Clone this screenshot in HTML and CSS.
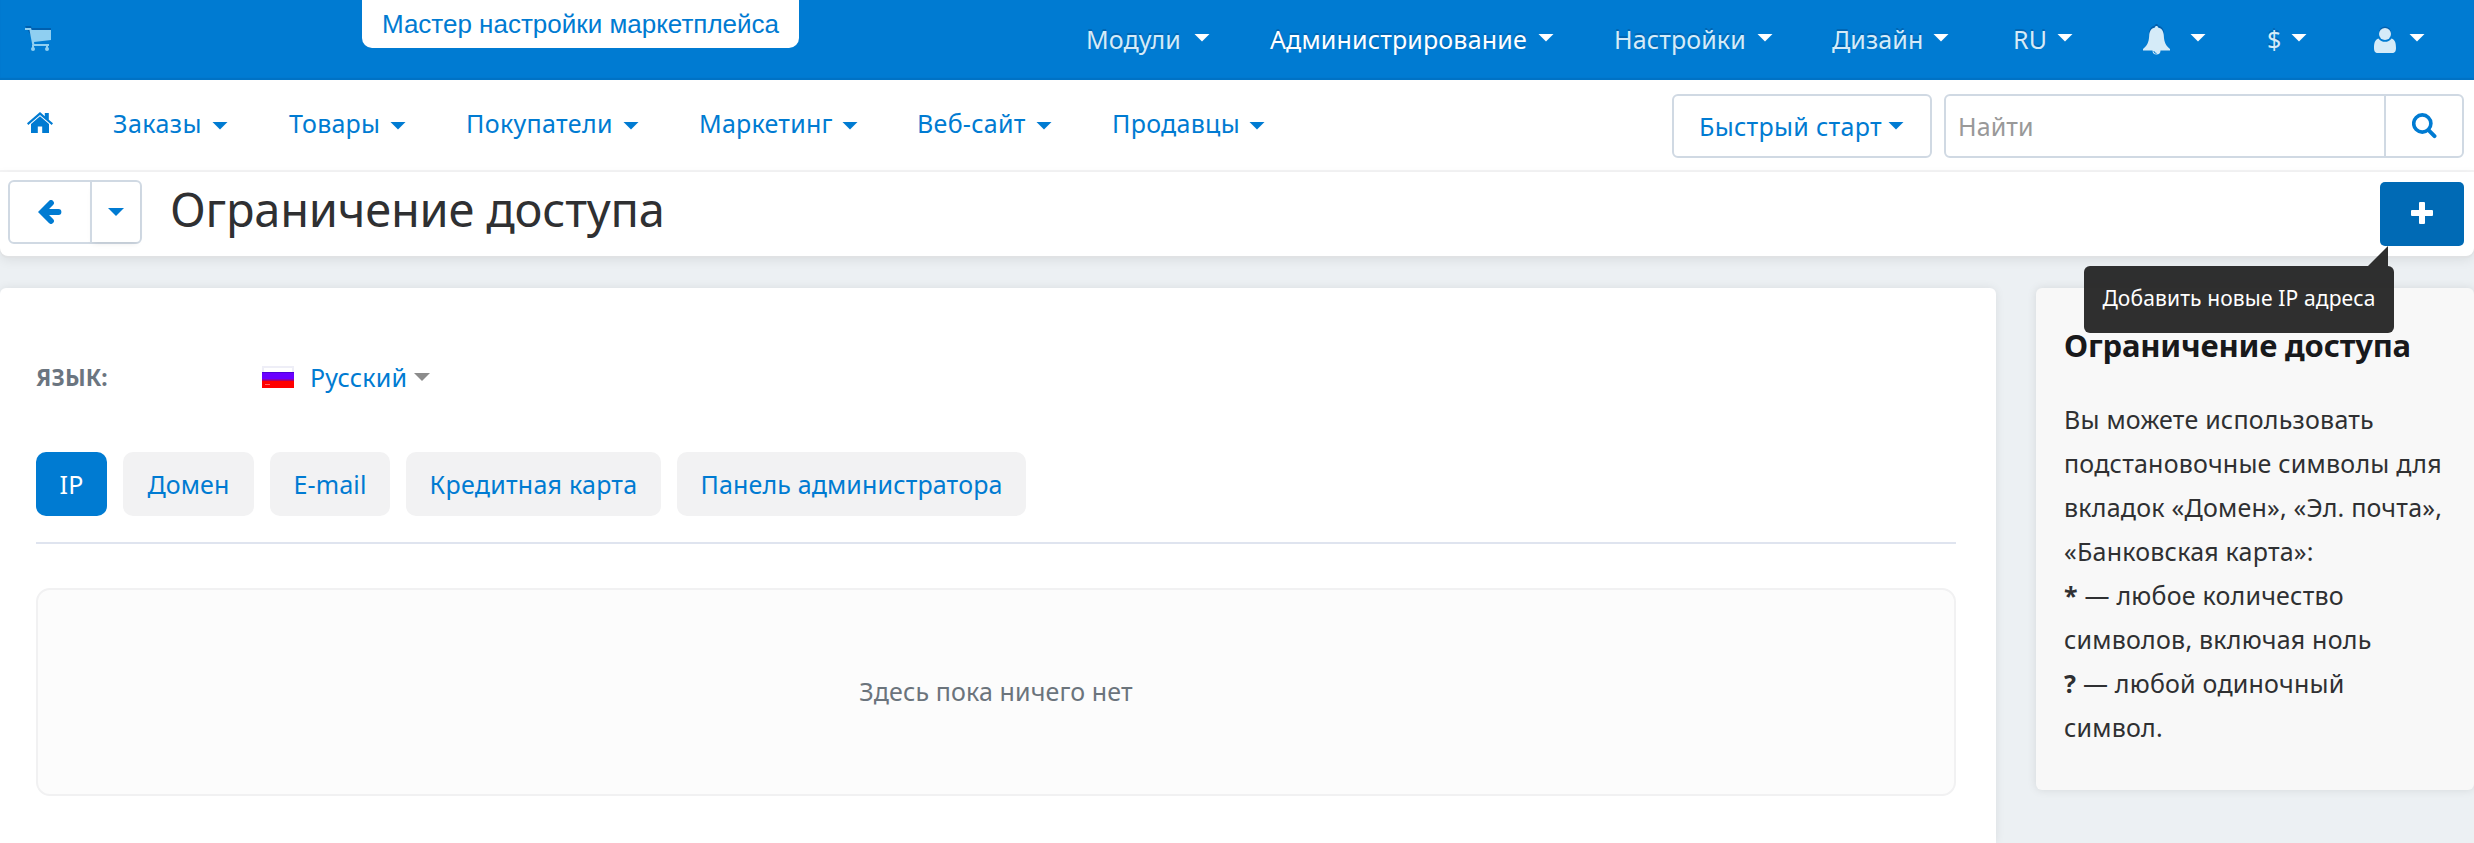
FILE: index.html
```html
<!DOCTYPE html>
<html lang="ru">
<head>
<meta charset="utf-8">
<title>Ограничение доступа</title>
<link rel="stylesheet" href="styles.css">
</head>
<body>
<header class="topbar">
  <svg class="cart" width="26" height="26" viewBox="0 0 26 26"><g fill="#005fae" transform="translate(0,-2)"><path d="M0 2h6l.6 2H26v10L9 16z"/></g><path fill="#8fcff1" d="M0 2h6l.6 2H26v10L9 16l.3 2H24v2H7.500L4.500 4H0z"/><path fill="#8fcff1" d="M7 19h2v4H7zM21 19h2v4h-2z"/><circle cx="8" cy="23" r="2" fill="#8fcff1"/><circle cx="22" cy="23" r="2" fill="#8fcff1"/></svg>
  <a class="wizard">Мастер настройки маркетплейса</a>
  <nav class="menu menu-top">
    <a class="item w-modules"><span>Модули</span><i class="caret"></i></a>
    <a class="item w-admin active"><span>Администрирование</span><i class="caret"></i></a>
    <a class="item w-settings"><span>Настройки</span><i class="caret"></i></a>
    <a class="item w-design"><span>Дизайн</span><i class="caret"></i></a>
    <a class="item w-lang"><span>RU</span><i class="caret"></i></a>
    <a class="item w-bell"><svg width="27" height="31" viewBox="0 0 27 31"><path fill="#005fae" d="M13.500 0c1 0 1.500.6 1.500 1.600 4 .8 6 4 6 8l-1 1c-1-5-2-7-6.500-7S8 6 7 11L6 10c0-4.500 2-7.500 6-8.400C12 .6 12.500 0 13.500 0z"/><path fill="#d5ebf8" d="M13.500 2c1 0 1.500.6 1.500 1.600 4 .8 5.600 4 5.800 8 .3 7 2.200 10.400 6.200 13.400v1.500h-9.500a4 4 0 0 1-8 0H0V25c4-3 5.900-6.400 6.200-13.400.2-4 1.800-7.200 5.800-8C12 2.600 12.500 2 13.500 2z"/><path d="M10.800 27a2.700 2.700 0 0 0 2.700 2.400" fill="none" stroke="#007bd2"/></svg><i class="caret"></i></a>
    <a class="item w-currency"><span>$</span><i class="caret"></i></a>
    <a class="item w-user"><svg width="22" height="27" viewBox="0 0 22 27"><circle cx="11" cy="6.500" r="6" fill="#005fae"/><circle cx="11" cy="8" r="6" fill="#d5ebf8"/><path fill="#d5ebf8" d="M4.500 12.500a8 8 0 0 0 13 0C21 13.500 22 17 22 22c0 3-1 5-4 5H4c-3 0-4-2-4-5 0-5 1-8.500 4.500-9.500z"/></svg><i class="caret"></i></a>
  </nav>
</header>

<div class="subbar">
  <svg class="home" width="26" height="21" viewBox="0 0 26 21"><path fill="#007bd2" d="M13 0l4.800 4.300V1h4v6.800L26 11.300 24.700 13 13 2.900 1.300 13 0 11.300z"/><path fill="#007bd2" d="M13 4.300l9 7.800V21h-6.800v-6.500h-4.400V21H4v-8.900z"/></svg>
  <nav class="menu menu-main">
    <a class="item w-orders"><span>Заказы</span><i class="caret"></i></a>
    <a class="item w-products"><span>Товары</span><i class="caret"></i></a>
    <a class="item w-customers"><span>Покупатели</span><i class="caret"></i></a>
    <a class="item w-marketing"><span>Маркетинг</span><i class="caret"></i></a>
    <a class="item w-website"><span>Веб-сайт</span><i class="caret"></i></a>
    <a class="item w-vendors"><span>Продавцы</span><i class="caret"></i></a>
  </nav>
  <a class="quick"><span>Быстрый старт</span><i class="caret"></i></a>
  <div class="search">
    <span class="search-text">Найти</span>
    <a class="search-btn"><svg width="25" height="26" viewBox="0 0 25 26"><circle cx="10.300" cy="10.500" r="8.600" fill="none" stroke="#007bd2" stroke-width="3.600"/><path d="M16.800 17.300l5.700 5.800" stroke="#007bd2" stroke-width="4" stroke-linecap="round"/></svg></a>
  </div>
</div>

<div class="titlebar">
  <div class="back">
    <a class="back-main"><svg width="24" height="24" viewBox="0 0 24 24"><path d="M13 3L4 12l9 9M4.500 12H20.500" fill="none" stroke="#007bd2" stroke-width="5.800" stroke-linecap="round"/></svg></a>
    <a class="back-more"><i class="caret"></i></a>
  </div>
  <h1>Ограничение доступа</h1>
  <div class="add">
    <svg width="22" height="22" viewBox="0 0 22 22"><path fill="#fff" d="M9 0h4q1 0 1 1v7h7q1 0 1 1v4q0 1-1 1h-7v7q0 1-1 1H9q-1 0-1-1v-7H1q-1 0-1-1V9q0-1 1-1h7V1q0-1 1-1z"/></svg>
    <div class="tooltip"><span>Добавить новые IP адреса</span></div>
  </div>
</div>

<div class="page">
  <main class="card">
    <div class="lang">
      <span class="lang-label">ЯЗЫК:</span>
      <svg class="flag" width="32" height="22" viewBox="0 0 32 22"><path fill="#eeeef7" d="M0 0h32v7H0z"/><path fill="#fff" d="M2 2h28v4H2z"/><path fill="#6a00ff" d="M0 6h32v9H0z"/><path fill="#4b00d8" d="M0 6h32v1H0z"/><path fill="#f00" d="M0 14h32v8H0z"/><path fill="#ad0068" d="M0 13.500h32V15H0z"/><path d="M3 18.500h5" stroke="#ff6464"/></svg>
      <span class="lang-name">Русский</span><i class="caret"></i>
    </div>
    <div class="tabs">
      <a class="tab t-ip on"><span>IP</span></a>
      <a class="tab t-domain"><span>Домен</span></a>
      <a class="tab t-mail"><span>E-mail</span></a>
      <a class="tab t-card"><span>Кредитная карта</span></a>
      <a class="tab t-panel"><span>Панель администратора</span></a>
    </div>
    <div class="empty"><span>Здесь пока ничего нет</span></div>
  </main>
  <aside class="help">
    <h2>Ограничение доступа</h2>
    <p>Вы можете использовать<br>подстановочные символы для<br>вкладок «Домен», «Эл. почта»,<br>«Банковская карта»:<br><b>*</b> — любое количество<br>символов, включая ноль<br><b>?</b> — любой одиночный<br>символ.</p>
  </aside>
</div>
</body>
</html>
```
FILE: styles.css
```css
* { box-sizing: border-box; }
body {
  margin: 0;
  height: 843px;
  overflow: hidden;
  display: flex;
  flex-direction: column;
  background: #ecf0f3;
  color: #2f3032;
  font: 25px/36px "Noto Sans", "Open Sans", sans-serif;
  letter-spacing: .12px;
}
svg { display: block; flex: none; }
span, h1, h2, p { white-space: nowrap; }

.caret {
  flex: none;
  width: 16px;
  height: 8px;
  background: currentColor;
  clip-path: polygon(0 0, 100% 0, 50% 100%);
}

/* Top bar */
.topbar {
  flex: none;
  height: 80px;
  display: flex;
  align-items: center;
  background: #007bd2;
  box-shadow: inset 0 -2px 1px #0072c4;
}
.cart { margin: -2px 0 0 25px; }
.wizard {
  align-self: flex-start;
  width: 437px;
  height: 48px;
  margin-left: 311px;
  border-radius: 0 0 10px 10px;
  background: #fff;
  color: #007bd2;
  font: 26px/49px "Liberation Sans", Arial, sans-serif;
  letter-spacing: 0;
  text-align: center;
  white-space: nowrap;
}
.menu { display: flex; align-items: center; }
.item { display: flex; align-items: center; justify-content: space-between; flex: none; }
.menu-top { margin: -2px 0 0 287px; color: #d5ebf8; text-shadow: 0 -2px 0 #0066b4; }
.menu-top .caret { color: #fff; margin-top: -3px; }
.menu-top .active { color: #fff; letter-spacing: .16px; }
.w-modules { width: 124px; margin-right: 60px; }
.w-admin { width: 284px; margin-right: 60px; }
.w-settings { width: 159px; margin-right: 59px; }
.w-design { width: 117px; margin-right: 64px; }
.w-lang { width: 60px; margin-right: 70px; }
.w-bell { width: 63px; margin-right: 61px; }
.w-currency { width: 40px; margin-right: 67px; }
.w-user { width: 51px; }

/* Main navigation */
.subbar {
  flex: none;
  height: 92px;
  display: flex;
  align-items: center;
  background: #fff;
  border-bottom: 2px solid #f4f4f5;
  color: #007bd2;
}
.home { margin: -5px 0 0 27px; }
.menu-main { margin: -4px 0 0 60px; }
.menu-main .caret { margin-top: 5px; }
.w-orders { width: 115px; margin-right: 61px; letter-spacing: .45px; }
.w-products { width: 117px; margin-right: 60px; letter-spacing: .2px; }
.w-customers { width: 173px; margin-right: 60px; letter-spacing: .35px; }
.w-marketing { width: 159px; margin-right: 59px; letter-spacing: .25px; }
.w-website { width: 135px; margin-right: 60px; letter-spacing: .3px; }
.w-vendors { width: 153px; letter-spacing: .3px; }
.quick {
  width: 260px;
  height: 64px;
  margin: 2px 12px 0 auto;
  padding: 0 26px 1px 25px;
  display: flex;
  align-items: center;
  justify-content: space-between;
  border: 2px solid #d0d9e3;
  border-radius: 6px;
  letter-spacing: .3px;
}
.search {
  width: 520px;
  height: 64px;
  margin: 2px 10px 0 0;
  display: flex;
  align-items: center;
  border: 2px solid #d0d9e3;
  border-radius: 6px;
}
.search-text { flex: 1; padding: 0 0 1px 12px; color: #999; }
.search-btn {
  width: 78px;
  height: 60px;
  display: flex;
  align-items: center;
  justify-content: center;
  border-left: 2px solid #d0d9e3;
}

/* Title bar */
.titlebar {
  flex: none;
  position: relative;
  z-index: 2;
  height: 84px;
  padding: 8px 10px 0 8px;
  display: flex;
  align-items: flex-start;
  background: #fff;
  border-radius: 0 0 8px 8px;
  box-shadow: 0 2px 0 #e0e2e4, 0 4px 12px rgba(0, 0, 0, .08);
}
.back {
  width: 134px;
  height: 64px;
  display: flex;
  border: 2px solid #d0d9e3;
  border-radius: 6px;
  color: #007bd2;
}
.back-main, .back-more { display: flex; align-items: center; justify-content: center; }
.back-main { width: 80px; }
.back-more { flex: 1; border-left: 2px solid #d0d9e3; box-shadow: 0 4px 6px -3px rgba(0, 0, 0, .1); }
h1 {
  margin: -3px 0 0 28px;
  font-size: 47px;
  line-height: 64px;
  font-weight: 400;
  letter-spacing: -.22px;
}
.add {
  position: relative;
  width: 84px;
  height: 64px;
  margin: 2px 0 0 auto;
  display: flex;
  align-items: center;
  justify-content: center;
  border-radius: 5px;
  background: #006ab5;
}
.add > svg { margin-top: -3px; }
.tooltip {
  position: absolute;
  top: 84px;
  right: 70px;
  width: 310px;
  height: 67px;
  border-radius: 6px;
  background: rgba(34, 34, 34, .94);
  color: #fff;
  font-size: 21px;
  line-height: 65px;
  letter-spacing: .14px;
  text-align: center;
}
.tooltip::before {
  content: "";
  position: absolute;
  right: 6px;
  top: -20px;
  width: 20px;
  height: 20px;
  background: rgba(34, 34, 34, .94);
  clip-path: polygon(100% 0, 100% 100%, 0 100%);
}

/* Content */
.page { flex: 1; display: flex; align-items: stretch; padding-top: 32px; }
.card {
  width: 1996px;
  padding: 71px 40px 0 36px;
  border-radius: 6px 6px 0 0;
  background: #fff;
  box-shadow: 0 0 10px rgba(0, 0, 0, .08);
}
.lang { display: flex; align-items: center; height: 36px; color: #007bd2; }
.lang-label { width: 226px; padding-top: 2px; font-size: 22.500px; font-weight: 700; color: #6b7580; }
.lang-name { width: 103px; padding-left: 16px; letter-spacing: .2px; }
.lang .caret { margin-left: 17px; color: #8c8c8c; }
.tabs { display: flex; gap: 16px; margin-top: 57px; padding-bottom: 26px; border-bottom: 2px solid #dfe4ef; }
.tab {
  height: 64px;
  padding-bottom: 1px;
  display: flex;
  align-items: center;
  justify-content: center;
  border-radius: 10px;
  background: #f2f2f3;
  color: #007bd2;
}
.on { background: #007bd2; color: #fff; }
.t-ip { width: 71px; }
.t-domain { width: 131px; }
.t-mail { width: 120px; }
.t-card { width: 255px; letter-spacing: .25px; }
.t-panel { width: 349px; letter-spacing: .15px; }
.empty {
  height: 208px;
  margin-top: 44px;
  padding-bottom: 2px;
  display: flex;
  align-items: center;
  justify-content: center;
  border: 2px solid #f1f1f2;
  border-radius: 14px;
  background: #fcfcfc;
  color: #6b747c;
}
.help {
  flex: 1;
  align-self: flex-start;
  height: 502px;
  margin-left: 40px;
  padding: 37px 0 0 28px;
  border-radius: 6px;
  background: #f8f8f8;
  box-shadow: 0 0 10px rgba(0, 0, 0, .1);
}
h2 { margin: 0; font-size: 31px; line-height: 40px; letter-spacing: -.2px; color: #18191b; }
p { margin: 32px 0 0; line-height: 44px; letter-spacing: .22px; }
```
